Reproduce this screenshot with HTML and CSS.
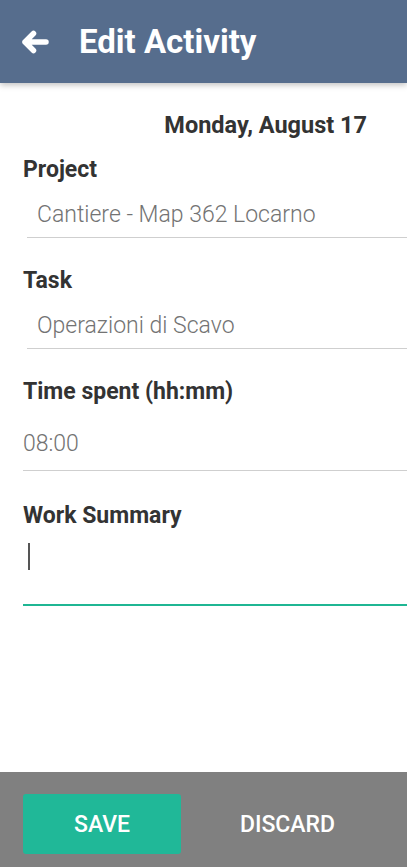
FILE: index.html
```html
<!DOCTYPE html>
<html>
<head>
<meta charset="utf-8">
<link rel="stylesheet" href="styles.css">
</head>
<body>
<div class="app">
  <header class="topbar">
    <svg class="back" viewBox="0 0 28 24" width="28" height="24"><path d="M4 12 L12.5 3.5 M4 12 L12.5 20.5 M4 12 H25" fill="none" stroke="#fff" stroke-width="5.5" stroke-linecap="round" stroke-linejoin="round"/></svg>
    <h1 class="title">Edit Activity</h1>
  </header>
  <main class="content">
    <div class="date">Monday, August 17</div>
    <div class="field">
      <div class="label">Project</div>
      <div class="value indent">Cantiere - Map 362 Locarno</div>
    </div>
    <div class="field">
      <div class="label">Task</div>
      <div class="value indent">Operazioni di Scavo</div>
    </div>
    <div class="field time">
      <div class="label">Time spent (hh:mm)</div>
      <div class="value">08:00</div>
    </div>
    <div class="field summary">
      <div class="label">Work Summary</div>
      <div class="textarea"><span class="cursor"></span></div>
    </div>
  </main>
  <footer class="bottombar">
    <button class="btn save">SAVE</button>
    <button class="btn discard">DISCARD</button>
  </footer>
</div>
</body>
</html>
```
FILE: styles.css
```css
html, body {
  margin: 0;
  padding: 0;
  background: #fff;
  font-family: Roboto, "Liberation Sans", sans-serif;
}
.app {
  width: 407px;
  height: 867px;
  display: flex;
  flex-direction: column;
  overflow: hidden;
}
.topbar {
  height: 83px;
  flex: none;
  background: #566d8d;
  display: flex;
  align-items: center;
  padding-left: 21px;
  gap: 30px;
  box-shadow: 0 2px 6px rgba(0,0,0,0.25);
  position: relative;
  z-index: 1;
}
.back { display: block; flex: none; }
.title {
  margin: 0;
  color: #fff;
  font-size: 33px;
  font-weight: 700;
  line-height: 40px;
}
.content {
  flex: 1;
  padding: 28px 0 0 23px;
}
.date {
  font-size: 23.5px;
  font-weight: 700;
  color: #333;
  line-height: 28px;
  text-align: right;
  padding-right: 40px;
  margin-bottom: 17px;
}
.field {
  margin-bottom: 29px;
}
.label {
  font-size: 23px;
  font-weight: 700;
  color: #333;
  line-height: 28px;
}
.value {
  font-size: 23px;
  font-weight: 300;
  color: #737373;
  line-height: 28px;
  padding: 17px 0 8px 0;
  border-bottom: 1px solid #cfcfcf;
}
.value.indent {
  padding-left: 10px;
  margin-left: 4px;
}
.field.time .value {
  padding: 24px 0 12px 0;
}
.field.time { margin-bottom: 31px; }
.textarea {
  height: 76px;
  border-bottom: 2px solid #1fb693;
  padding-top: 13px;
  box-sizing: border-box;
}
.cursor {
  display: block;
  width: 2px;
  height: 27px;
  margin-left: 5px;
  background: #555;
}
.bottombar {
  height: 95px;
  flex: none;
  background: #808080;
  display: flex;
  align-items: flex-start;
  padding: 22px 0 0 23px;
  box-sizing: border-box;
}
.btn {
  border: none;
  padding: 0;
  flex: none;
  font-family: Roboto, "Liberation Sans", sans-serif;
  font-size: 23px;
  font-weight: 500;
  color: #fff;
  cursor: pointer;
}
.save {
  width: 158px;
  height: 60px;
  background: #20b898;
  border-radius: 3px;
}
.discard {
  background: transparent;
  width: 213px;
  height: 60px;
}
```
